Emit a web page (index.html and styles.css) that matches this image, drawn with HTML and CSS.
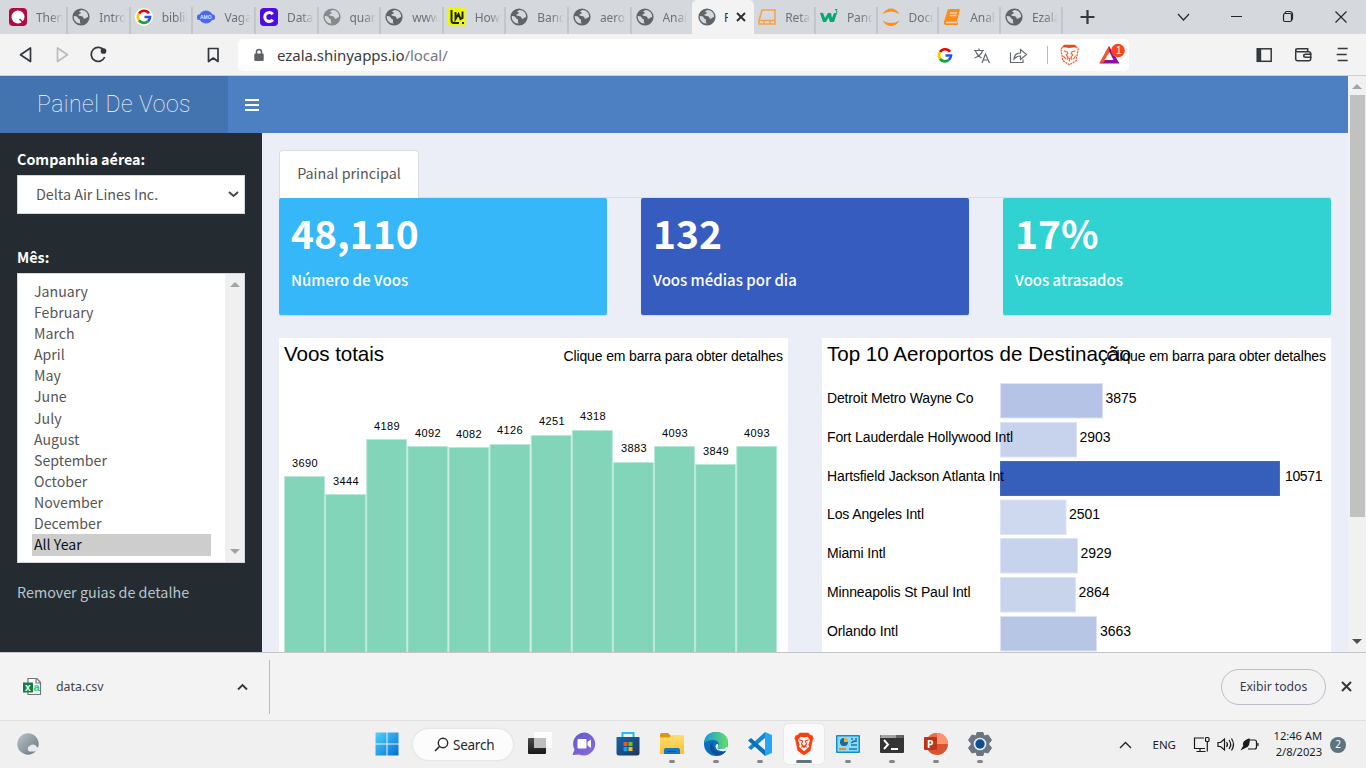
FILE: index.html
```html
<!DOCTYPE html>
<html lang="pt">
<head>
<meta charset="utf-8">
<title>Painel De Voos</title>
<link rel="stylesheet" href="styles.css">
</head>
<body>
<svg class="defs" width="0" height="0">
  <defs>
    <symbol id="globe" viewBox="0 0 18 18"><circle cx="9" cy="9" r="8.6" fill="currentColor"/><path d="M1.800 8c2.500-.2 3.800.7 4.100 1.900.2 1 2 .8 2.100 2 .1 1.200-.6 2.200.8 3.600C4.800 15.900 1.300 12.300 1.800 8zM9.500 2c-.8.7-2.400.8-2.300 1.700.1.700 1.900.4 1.700 1.400-.2 1-2.200.8-2.500 1.700-.2.700.6 1.200 2.200 1.200 1.500.1 2.700.5 2.800 1.600.1 1 .6 1.300 1.500 1.100 1.200-.3 1.800-1.700 3.200-1.700C16.500 5 13.200 2.200 9.500 2z" fill="#d5d8dc"/></symbol>
    <symbol id="google" viewBox="0 0 18 18"><g fill="none" stroke-width="2.700"><path d="M14 5.300A6 6 0 0 0 4 5.600" stroke="#e60000"/><path d="M4 5.600a6 6 0 0 0 0 6.800" stroke="#f4d000"/><path d="M4 12.400a6 6 0 0 0 9 .8" stroke="#10a830"/><path d="M9.500 9h5.500a6 6 0 0 1-2 4.200" stroke="#2850e8"/></g></symbol>
    <symbol id="lion" viewBox="0 0 24 28"><path d="M7 1h10l2.500 2.500L22 4l1 4-1 2-2.500 12L12 27l-7.500-5L2 10 1 8l1-4 2.500-.5z" fill="#ff3d0b"/><path d="M8 5.500l4 1 4-1 3 4-2 5.500 1 2-6 5.500L6 17l1-2-2-5.500z" fill="#fff"/><path d="M6.500 9l4 1.500L9 14l2 2-2 2M17.500 9l-4 1.500L15 14l-2 2 2 2M10.500 16.500h3L12 18z" fill="none" stroke="#f23c12" stroke-width="1.300"/></symbol>
    <symbol id="lion-light" viewBox="0 0 24 28"><path d="M6 2.500h12l4.500 4-2.500 14.500L12 26l-8-5L1.500 6.500z" fill="#fff" stroke="#f5572c" stroke-width="1.500" stroke-dasharray="2.500 1"/><path d="M5.500 1.500h13l3 3.500-4-.5-5.500 1-5.500-1-4 .5z" fill="#fb4310"/><path d="M5 9l4 1 1 2-2 2 2 2-1 4M19 9l-4 1-1 2 2 2-2 2 1 4M4.500 15l3 4M19.500 15l-3 4M9.500 17l2.500 1.500 2.500-1.500M12 18v4" fill="none" stroke="#f66a38" stroke-width="1.400"/></symbol>
    <linearGradient id="gWin" x2="1" y2="1"><stop stop-color="#4fd3ff"/><stop offset="1" stop-color="#006fd2"/></linearGradient>
    <linearGradient id="gEdge" x2="1"><stop stop-color="#1899dc"/><stop offset="1" stop-color="#66df62"/></linearGradient>
    <linearGradient id="gTask" x2="0" y2="1"><stop stop-color="#4c4c4c"/><stop offset="1" stop-color="#171717"/></linearGradient>
    <linearGradient id="gChat" x2="1" y2="1"><stop stop-color="#5c5dcd"/><stop offset="1" stop-color="#8d68d8"/></linearGradient>
    <linearGradient id="gFold" x2="0" y2="1"><stop stop-color="#ffde70"/><stop offset="1" stop-color="#fac12d"/></linearGradient>
    <linearGradient id="gMoon" x2="1" y2="1"><stop stop-color="#bac4cb"/><stop offset="1" stop-color="#69737c"/></linearGradient>
    <linearGradient id="gStore" x2="1" y2="1"><stop stop-color="#1266ae"/><stop offset="1" stop-color="#20375f"/></linearGradient>
  </defs>
</svg>

<div class="tabs">
  <div class="tab first"><svg class="fav" viewBox="0 0 18 18"><rect width="18" height="18" rx="4" fill="#b20b42"/><circle cx="9" cy="9" r="6.500" fill="#fff"/><path d="M10.500 11l4 4" stroke="#b20b42" stroke-width="1.500"/></svg><span>Then</span></div>
  <div class="tab"><svg class="fav"><use href="#globe"/></svg><span>Intro</span></div>
  <div class="tab"><svg class="fav" viewBox="0 0 18 18"><circle cx="9" cy="9" r="9" fill="#fff"/><use href="#google" width="18" height="18"/></svg><span>biblia</span></div>
  <div class="tab"><svg class="fav" viewBox="0 0 18 18"><ellipse cx="9" cy="9" rx="7" ry="6.500" fill="#4f66f2"/><rect y="6.500" width="18" height="5.500" rx="2" fill="#4f66f2"/><text x="3" y="11" class="fav-amo">AMO</text></svg><span>Vaga</span></div>
  <div class="tab"><svg class="fav" viewBox="0 0 18 18"><rect width="18" height="18" rx="4" fill="#4f0ce0"/><path d="M12.800 6.200a4.500 4.500 0 1 0 0 5.600" fill="none" stroke="#fff" stroke-width="3"/></svg><span>Data</span></div>
  <div class="tab"><svg class="fav light"><use href="#globe"/></svg><span>quar</span></div>
  <div class="tab"><svg class="fav"><use href="#globe"/></svg><span>www.</span></div>
  <div class="tab"><svg class="fav" viewBox="0 0 18 18"><rect width="18" height="18" fill="#ecfa00"/><path d="M3.500 2v10.500q0 2.500 2.500 2.500h5M7.500 4v7l3-5 2 5 2-1V3.500" fill="none" stroke="#222" stroke-width="2"/><rect x="14" y="14" width="2" height="2" fill="#222"/></svg><span>How</span></div>
  <div class="tab"><svg class="fav"><use href="#globe"/></svg><span>Banc</span></div>
  <div class="tab"><svg class="fav"><use href="#globe"/></svg><span>aero</span></div>
  <div class="tab last"><svg class="fav"><use href="#globe"/></svg><span>Anali</span></div>
  <div class="tab active"><svg class="fav"><use href="#globe"/></svg><span>Painel</span><svg class="x" viewBox="0 0 10 10"><path d="M1 1l8 8M9 1L1 9" stroke="#2c2e33" stroke-width="1.900"/></svg></div>
  <div class="tab after"><svg class="fav" viewBox="0 0 18 18"><path d="M4 2h13v10.500H1zM1 12.500V16h16v-3.500M6 13v3M12 13v3" fill="none" stroke="#f5a04a" stroke-width="1.500"/></svg><span>Reta</span></div>
  <div class="tab after"><svg class="fav" viewBox="0 0 18 18"><path d="M0 5q3-1 3.500 1L5 10l3-5h3l1 5 2-5h3l-3 9h-4L8.500 9.500 6 14H3z" fill="#04aa6d"/><path d="M15 1.500h2l-1 1.500q2 .5.500 2" fill="none" stroke="#04aa6d"/></svg><span>Panc</span></div>
  <div class="tab after"><svg class="fav" viewBox="0 0 18 18"><path d="M.5 6Q4 .5 9 .5T17.500 6Q13 3.500 9 3.500T.5 6zM.5 12.500Q4 18 9 18t8.500-5.500Q13 15 9 15T.5 12.500z" fill="#ff8d20"/></svg><span>Docu</span></div>
  <div class="tab after"><svg class="fav" viewBox="0 0 18 18"><path d="M5 1h12l-3 12.500 1 .500-.5 3H3q-2.500 0-2-3.500z" fill="#ff8b10"/><path d="M7 5h7M6.500 7.500h7M3 14.500h11" stroke="#d5d8dc" stroke-width="1.300"/></svg><span>Anali</span></div>
  <div class="tab after"><svg class="fav"><use href="#globe"/></svg><span>Ezala</span></div>
  <svg class="window-controls" width="300" height="34" fill="none" stroke="#25272b" stroke-width="1.200"><path d="M14.500 17h14M21.500 10v14" stroke="#36393f" stroke-width="2.200"/><path d="M112 14l5.500 6 5.500-6M165 16.500h11M219 13.500q0-2 2-2h2.500q3 0 3 3v3.500q0 2-1 2"/><rect x="217.500" y="13.500" width="8" height="8" rx="1.500"/><path d="M269.500 11.500l11 11M280.500 11.500l-11 11"/></svg>
</div>

<div class="toolbar">
  <svg class="nav" width="238" height="41" fill="none" stroke="#33363c" stroke-width="1.700" stroke-linejoin="round"><path d="M30.500 14v13.500l-10-6.700z"/><path d="M57.500 14v13.500l10-6.700z" stroke="#babbbd"/><path d="M104 16.500a7 7 0 1 0 .7 6.500"/><circle cx="103.500" cy="17" r="2" fill="#33363c"/><path d="M208.500 14.500h9.500V27.500l-4.700-3.500-4.800 3.500z"/></svg>
  <div class="address">
    <svg class="lock" width="10" height="14"><path d="M2.500 6V4a2.500 2.500 0 0 1 5 0v2" fill="none" stroke="#5c6067" stroke-width="1.500"/><rect x=".3" y="5.500" width="9.400" height="7.500" rx="1" fill="#5c6067"/></svg>
    <span class="url">ezala.shinyapps.io<span class="path">/local/</span></span>
    <svg class="address-icons" width="197" height="32" viewBox="0 0 197 32">
      <use href="#google" x="4" y="7.500" width="18" height="18"/>
      <g fill="none" stroke="#66696e" stroke-width="1.200"><path d="M42 11.500h10M47 9.500v2M43.500 12q2 5 6 7M50.500 12q-2 5-8 7M50 24l3.500-9 4 9M51.500 21h5"/><path d="M78.500 13.500v10h12.500v-3M82 20q.5-6 6.500-6v-3.500l6 5-6 5V17q-4 0-6.500 3z"/></g>
      <path d="M115.500 7v18" stroke="#b9babd"/>
      <use href="#lion-light" x="127" y="4.500" width="21" height="23"/>
      <path d="M177 7l10.500 17.500h-20z" fill="#8a12a2"/><path d="M177 7l-9.500 17 4-.5 6-9z" fill="#ff5326"/><path d="M177.500 13l4 8h-9z" fill="#fff"/><circle cx="186" cy="11.500" r="6.800" fill="#ff4514"/><text class="badge" x="184" y="15">1</text>
    </svg>
  </div>
  <svg class="tools" width="236" height="41" fill="none" stroke="#34373c" stroke-width="1.500"><g transform="translate(.7 .3)"><rect x="127.500" y="14.500" width="14" height="12.500"/><path d="M129.500 14v13" stroke-width="4"/><path d="M166 17v7.500q0 2 2 2h11q2 0 2-2v-5q0-2-2-2h-11q-2 0-2-1.500t2-1.500h10v3M182 20h-6q-2 0-2 1.500t2 1.500h6"/><path d="M208 14.200h10M207 20.200h10M208 26.200h10" stroke-width="1.700"/></g></svg>
</div>

<div class="viewport">
  <div class="app">
    <header class="app-header"><div class="brand">Painel De Voos</div><svg class="burger" width="14" height="12"><path d="M0 1h14M0 6h14M0 11h14" stroke="#fff" stroke-width="2"/></svg></header>
    <div class="app-body">
      <aside class="sidebar">
        <div class="label">Companhia aérea:</div>
        <div class="select"><span>Delta Air Lines Inc.</span><svg width="11" height="7"><path d="M1 1l4.500 4L10 1" fill="none" stroke="#484848" stroke-width="2"/></svg></div>
        <div class="label month-label">Mês:</div>
        <div class="listbox">
          <div class="options"><div>January</div><div>February</div><div>March</div><div>April</div><div>May</div><div>June</div><div>July</div><div>August</div><div>September</div><div>October</div><div>November</div><div>December</div><div class="selected">All Year</div></div>
          <div class="list-scroll"><svg width="10" height="5"><path d="M0 5l5-5 5 5z" fill="#a3a3a3"/></svg><svg width="10" height="5"><path d="M0 0l5 5 5-5z" fill="#a3a3a3"/></svg></div>
        </div>
        <div class="remove">Remover guias de detalhe</div>
      </aside>
      <main class="main">
        <div class="page-tabs"><div class="page-tab">Painal principal</div></div>
        <div class="cards">
          <div class="card sky"><div class="value">48,110</div><div class="caption">Número de Voos</div></div>
          <div class="card blue"><div class="value">132</div><div class="caption">Voos médias por dia</div></div>
          <div class="card teal"><div class="value">17%</div><div class="caption">Voos atrasados</div></div>
        </div>
        <div class="charts">
          <svg class="chart" width="509" height="314">
            <text class="title" x="5" y="23" textLength="100">Voos totais</text><text class="hint" x="284.500" y="23" textLength="219.500">Clique em barra para obter detalhes</text>
            <g class="bars" fill="#82d5b8" stroke="#b9e8d8"><path d="M5.500 320V138.500h40V320M46.600 320V156.500h40V320M87.700 320V101.500h40V320M128.800 320V108.500h40V320M169.900 320V109.500h40V320M211 320V106.500h40V320M252.200 320V97.500h40V320M293.300 320V92.500h40V320M334.400 320V124.500h40V320M375.500 320V108.500h40V320M416.600 320V126.500h40V320M457.700 320V108.500h40V320"/></g>
            <g class="vals"><text x="26" y="129">3690</text><text x="67" y="147">3444</text><text x="108" y="92">4189</text><text x="149" y="99">4092</text><text x="190" y="100">4082</text><text x="231" y="96">4126</text><text x="273" y="87">4251</text><text x="314" y="82">4318</text><text x="355" y="114">3883</text><text x="396" y="99">4093</text><text x="437" y="117">3849</text><text x="478" y="99">4093</text></g>
          </svg>
          <svg class="chart" width="509" height="314">
            <text class="title" x="5" y="23" textLength="304">Top 10 Aeroportos de Destinação</text><text class="hint" x="284.500" y="23" textLength="219.500">Clique em barra para obter detalhes</text>
            <g stroke="#dce3f3"><rect x="178.500" y="45.500" width="102" height="34.500" fill="#b5c3e6"/><rect x="178.500" y="84.500" width="76" height="34.500" fill="#c7d2ec"/><rect x="178.500" y="123.500" width="279" height="34" fill="#355fbb" stroke="#446bc0"/><rect x="178.500" y="162" width="65.500" height="34.500" fill="#ced9f0"/><rect x="178.500" y="200.500" width="77" height="34.500" fill="#c7d2ec"/><rect x="178.500" y="239.500" width="75" height="34.500" fill="#c8d3ec"/><rect x="178.500" y="278.500" width="96" height="34.500" fill="#b8c6e6"/></g>
            <g class="rows"><text x="5" y="65" textLength="146.500">Detroit Metro Wayne Co</text><text x="283.500" y="65">3875</text><text x="5" y="104" textLength="186">Fort Lauderdale Hollywood Intl</text><text x="257.500" y="104">2903</text><text x="5" y="143" textLength="177">Hartsfield Jackson Atlanta Int</text><text x="463" y="143" textLength="37.500">10571</text><text x="5" y="181" textLength="97">Los Angeles Intl</text><text x="247" y="181">2501</text><text x="5" y="220" textLength="58.500">Miami Intl</text><text x="258.500" y="220">2929</text><text x="5" y="259" textLength="143.500">Minneapolis St Paul Intl</text><text x="256.500" y="259">2864</text><text x="5" y="298" textLength="71">Orlando Intl</text><text x="278" y="298">3663</text></g>
          </svg>
        </div>
      </main>
    </div>
  </div>
  <div class="scrollbar"><svg width="10" height="5"><path d="M0 5l5-5 5 5z" fill="#a3a3a3"/></svg><div class="thumb"></div><svg width="10" height="5"><path d="M0 0l5 5 5-5z" fill="#505050"/></svg></div>
</div>

<div class="downloads">
  <div class="file">
    <svg width="19" height="19"><path d="M5 1.500h9l3.500 4v12H5zM13 1.500v4.500h5" fill="#fff" stroke="#777" stroke-width="1.200"/><rect y="5.500" width="10" height="10" fill="#128040"/><text class="file-x" x="2" y="14">x</text><text class="file-a" x="10.500" y="14">a</text></svg>
    <span>data.csv</span>
    <svg class="caret" width="11" height="8"><path d="M1 6.500l4.500-4.500L10 6.500" fill="none" stroke="#33363b" stroke-width="1.800"/></svg>
  </div>
  <div class="show-all">Exibir todos</div>
  <svg width="11" height="11"><path d="M1 1l9 9M10 1l-9 9" stroke="#33363b" stroke-width="2"/></svg>
</div>

<div class="taskbar">
  <svg class="weather" width="24" height="24"><circle cx="11" cy="12" r="10.700" fill="url(#gMoon)"/><path d="M12.500 19.500a3 3 0 0 1 0-5.500 4.500 4.500 0 0 1 7.500 1 2.500 2.500 0 0 1 .500 4.500z" fill="#e7e9ed"/></svg>
  <div class="apps">
    <div class="app-icon"><svg viewBox="0 0 24 24"><g fill="url(#gWin)"><path d="M.5.500h11v11H.500zM12.500.5h11v11h-11zM.5 12.500h11v11H.500zM12.500 12.500h11v11h-11z"/></g></svg></div>
    <div class="search"><svg width="15" height="16"><circle cx="9" cy="6" r="4.700" fill="none" stroke="#262626" stroke-width="1.400"/><path d="M5.500 9.500L1 14" stroke="#262626" stroke-width="1.600"/></svg><span>Search</span></div>
    <div class="app-icon"><svg viewBox="0 0 24 24"><rect y="6" width="18" height="16" rx="1" fill="url(#gTask)"/><rect x="6" y="0" width="18" height="16" rx="1" fill="#fff" opacity=".85"/><path d="M6 6h12v10H6z" fill="#bebebe"/></svg></div>
    <div class="app-icon"><svg viewBox="0 0 24 24"><path d="M12 .5A11.500 11.500 0 1 1 7 22.500L.5 23l2-5.500A11.500 11.500 0 0 1 12 .5z" fill="url(#gChat)"/><rect x="5.500" y="7" width="9" height="9.500" rx="1" fill="#fff"/><path d="M15.500 10l3.500-2.500v8.500l-3.500-2.500z" fill="#fff"/></svg></div>
    <div class="app-icon"><svg viewBox="0 0 24 24"><path d="M6.500 6V1h11v5" fill="none" stroke="#24bdec" stroke-width="2"/><path d="M.5 5h23v16q0 2.500-2.500 2.500H3Q.5 23.500.5 21z" fill="url(#gStore)"/><path d="M7.500 10h4v4h-4z" fill="#f35325"/><path d="M12.500 10h4v4h-4z" fill="#81bc06"/><path d="M7.500 15h4v4h-4z" fill="#05a6f0"/><path d="M12.500 15h4v4h-4z" fill="#ffba08"/></svg></div>
    <div class="app-icon run"><svg viewBox="0 0 24 24"><path d="M0 3q0-2 2-2h6l3 3v4H0z" fill="#d6980e"/><path d="M0 5.500h9L12 3h12v19H0z" fill="url(#gFold)"/><path d="M4 22v-4q0-2 2-2h12q2 0 2 2v4z" fill="#1175c9"/><path d="M8 19h8v1H8z" fill="#075494"/></svg></div>
    <div class="app-icon run"><svg viewBox="0 0 24 24"><circle cx="12" cy="12" r="12" fill="#096fc0"/><path d="M0 11Q1 0 12 0c8 0 12 5 12 10s-3 7-7 7c-3 0-4-1-3-2 2-2 1-7-5-7S0 11 0 11z" fill="url(#gEdge)"/><path d="M8.500 10c-5 3-2 14 6 13.500 3 0 6-2 7.500-4.500-6 2.500-12 0-13-5 0-2 .5-3-.5-4z" fill="#124f98"/><path d="M14 12q1 2-.5 3.500Q13 17 17 17q5 0 7-4-.5 4-2.500 6-9 1-10-4.500 0-3 2.500-2.500z" fill="#eef3f4"/></svg></div>
    <div class="app-icon run"><svg viewBox="0 0 24 24"><path d="M17 0l7 3v18l-7 3z" fill="#2aa5f2"/><path d="M17 0v6L3 18l-3-2.500z" fill="#1688d1"/><path d="M0 8.500L3 6l14 12v6z" fill="#0872b8"/></svg></div>
    <div class="app-icon run current"><svg viewBox="0 0 24 24"><use href="#lion" x="1" width="22" height="24"/></svg></div>
    <div class="app-icon run"><svg viewBox="0 0 24 24"><rect y="3" width="24" height="18" rx="1" fill="#168bd0"/><rect x="1.500" y="4.500" width="21" height="15" fill="#8bdcfb"/><circle cx="8" cy="10" r="4" fill="#116bae"/><path d="M8 10V5.500A4.500 4.500 0 0 1 12.500 10z" fill="#fcaa20"/><path d="M15 7h2m2 0h2M15 11l3-2h3M15 13h6M13 17h8" stroke="#1879ba" stroke-width="1.500"/><path d="M3 17h7" stroke="#f28d13" stroke-width="2"/></svg></div>
    <div class="app-icon run"><svg viewBox="0 0 24 24"><rect y="3" width="24" height="18" rx="1" fill="#343434"/><path d="M1 3h15v3H0z" fill="#a3a3a3"/><path d="M16 3h7l1 3h-8z" fill="#666"/><path d="M4 8l4 4.500L4 17M11 17h7" fill="none" stroke="#fff" stroke-width="1.900"/></svg></div>
    <div class="app-icon run"><svg viewBox="0 0 24 24"><circle cx="13" cy="12" r="11" fill="#d65434"/><path d="M13 1a11 11 0 0 1 11 11H13z" fill="#ff946f"/><path d="M13 1v11H2A11 11 0 0 1 13 1z" fill="#ed6c47"/><rect y="5" width="13" height="13" rx="1" fill="#bd3519"/><text class="ppt" x="3" y="15.500">P</text></svg></div>
    <div class="app-icon run"><svg viewBox="0 0 24 24"><path d="M9 .5h6l1 3.500 4-1 3.500 5-3 4 3 4-3.500 5-4-1-1 3.500H9L8 20l-4 1L.5 16l3-4-3-4L4 3l4 1z" fill="#6b7680" stroke="#6b7680" stroke-linejoin="round"/><circle cx="12" cy="12" r="6.300" fill="#e6eef2"/><circle cx="12" cy="12" r="4.700" fill="#0d4d91"/></svg></div>
  </div>
  <div class="tray">
    <svg width="13" height="8"><path d="M1 7l5.500-5.500L12 7" fill="none" stroke="#202020" stroke-width="1.300"/></svg>
    <span class="lang">ENG</span>
    <svg class="status" width="66" height="18" fill="none" stroke="#1b1b1b" stroke-width="1.200"><path d="M11 2H1.500v10.500H12M7 12.500v3M3.500 15.500h9"/><rect x="12.500" y="1.500" width="3.500" height="4" rx="1"/><path d="M14.300 5.500v10"/><path d="M25 6.500h2.500L31.500 3v11L27.500 10.500H25zM33.500 6q2 2.500 0 5M36 4q3.500 4.500 0 9M38.500 2.500q4 6 0 12"/><path d="M56 4h5.500q2 0 2 2v5q0 2-2 2H55M65 7v3"/><path d="M49 13l2-3.500q-2-4 5-6.500 1 7-4 8.500z" fill="#1b1b1b"/></svg>
    <div class="clock"><div>12:46 AM</div><div>2/8/2023</div></div>
    <div class="count">2</div>
  </div>
</div>
</body>
</html>
```
FILE: styles.css
```css
* { box-sizing: border-box; }
body { margin: 0; width: 1366px; height: 768px; overflow: hidden; display: flex; flex-direction: column; font-family: "Noto Sans", sans-serif; background: #f3f3f3; }
svg { display: block; flex: none; }
.defs { position: absolute; }

.tabs { height: 34px; flex: none; display: flex; background: #d5d8dc; padding-left: 5px; }
.tab { width: 62.600px; flex: none; display: flex; align-items: center; padding: 0 3px 0 4px; gap: 9px; border-right: 2px solid transparent; border-image: linear-gradient(transparent 22%, #c3c5c9 22%) 1; }
.tab.first { width: 63.200px; }
.tab.last { width: 60.400px; border-image: none; }
.tab.after { width: 61.700px; }
.tab span { flex: 1; min-width: 0; overflow: hidden; white-space: nowrap; font-size: 12px; letter-spacing: -.1px; color: #6e7176; -webkit-mask-image: linear-gradient(90deg, #000 55%, transparent); }
.fav { width: 18px; height: 18px; color: #606368; }
.fav.light { color: #888989; }
.fav-amo { font: bold 5px "Liberation Sans", sans-serif; fill: #dce4ff; }
.tab.active { width: 62.300px; background: #f3f3f3; border-radius: 5px 5px 0 0; border-image: none; padding-left: 6px; gap: 6px; }
.tab.active span { color: #33363a; flex: 0 0 4px; margin-left: 2px; -webkit-mask-image: none; }
.x { width: 10px; height: 10px; margin-left: 2px; }
.window-controls { margin-left: auto; }

.toolbar { height: 42px; flex: none; display: flex; border-bottom: 1px solid #cfcfd1; background: #f3f3f3; }
.address { width: 891px; height: 32px; margin-top: 5px; background: #fff; border-radius: 5px; display: flex; align-items: center; }
.lock { margin-left: 16px; }
.url { margin-left: 13px; font-size: 15px; letter-spacing: -.05px; color: #393b40; }
.path { color: #74767a; }
.address-icons { margin-left: auto; }
.badge { font: 10px "Liberation Sans", sans-serif; fill: #fff; }

.viewport { height: 576px; flex: none; display: flex; overflow: hidden; }
.app { width: 1348px; font-family: "Noto Sans CJK SC", sans-serif; }
.app-header { height: 57px; display: flex; align-items: center; background: #4d80c2; }
.brand { width: 228px; height: 57px; line-height: 58px; text-align: center; color: #fff; background: #4474b0; font-family: Roboto, sans-serif; font-weight: 100; font-size: 23px; letter-spacing: .5px; white-space: nowrap; }
.burger { margin-left: 17px; }
.app-body { height: 519px; display: flex; }
.sidebar { width: 262px; background: #242c32; padding: 14px 17px; color: #fff; font-size: 14.330px; }
.label { height: 24px; line-height: 23px; font-weight: 700; margin-bottom: 4px; }
.select { height: 39px; border: 1px solid #d2d6de; background: #fff; color: #555; padding: 0 5px 0 18px; display: flex; align-items: center; justify-content: space-between; }
.select span { line-height: 34px; margin-bottom: 2px; }
.month-label { margin-top: 31px; }
.listbox { height: 290px; border: 1px solid #d2d6de; background: #fff; color: #555; display: flex; }
.options { flex: 1; padding: 7px 14px; line-height: 21.100px; font-size: 14.150px; }
.options div { height: 21.100px; padding-left: 2px; }
.options .selected { background: #cdcdcd; color: #101010; height: 22px; }
.list-scroll { width: 19px; background: #f0f0f0; display: flex; flex-direction: column; justify-content: space-between; align-items: center; padding: 8px 0; }
.remove { color: #b8c7ce; margin-top: 18px; line-height: 22px; }

.main { flex: 1; background: #ebeef6; padding: 17px 17px 0; }
.page-tabs { height: 48px; border-bottom: 1px solid #dcdcdf; }
.page-tab { width: 140px; height: 48px; line-height: 44px; text-align: center; background: #fff; color: #555; border: 1px solid #dcdcdf; border-bottom: 0; border-radius: 4px 4px 0 0; font-size: 14.330px; }
.cards { display: flex; gap: 34px; }
.card { width: 328px; height: 117px; padding: 10px 12px; border-radius: 2px; color: #fff; box-shadow: 0 1px 1px rgba(0,0,0,.1); }
.sky { background: #35b7f9; } .blue { background: #365cc0; } .teal { background: #30d2d2; }
.value { font-size: 39px; line-height: 48px; font-weight: 700; }
.caption { font-size: 15px; font-weight: 500; line-height: 22px; margin-top: 13px; }
.charts { display: flex; gap: 34px; margin-top: 23px; }
.chart { background: #fff; font-family: "Liberation Sans", sans-serif; }
.title { font-size: 20.600px; } .hint, .rows { font-size: 14px; }
.vals { font-size: 11px; text-anchor: middle; letter-spacing: .4px; }
.scrollbar { width: 18px; background: #f1f1f1; display: flex; flex-direction: column; align-items: center; padding: 8px 0; }
.thumb { width: 15px; height: 422px; margin: 6px 0 auto; background: #c1c1c1; }

.downloads { height: 68px; flex: none; border-top: 1px solid #c5c5c7; display: flex; align-items: center; padding-right: 14px; background: #f3f3f3; }
.file { width: 270px; height: 54px; border-right: 1px solid #bbb; display: flex; align-items: center; padding: 0 21px 0 23px; font-size: 12.400px; color: #414247; }
.file span { margin-left: 14px; }
.caret { margin-left: auto; }
.file-x { font: bold 10px "Liberation Sans", sans-serif; fill: #fff; }
.file-a { font: bold 11px "Liberation Sans", sans-serif; fill: #20ce7a; }
.show-all { width: 105px; height: 36px; line-height: 33px; text-align: center; border: 1px solid #bcbccc; border-radius: 18px; margin: 0 15px 0 auto; font-size: 12.200px; color: #39394d; }

.taskbar { height: 48px; flex: none; display: flex; background: #f0f0f0; border-top: 1px solid #e0e0e0; }
.weather { margin: 11px 0 0 17px; }
.apps { display: flex; margin-left: 326px; gap: 4px; padding-top: 3px; }
.app-icon { width: 40px; height: 40px; display: flex; flex-direction: column; align-items: center; padding-top: 8px; border-radius: 4px; }
.app-icon svg { width: 24px; height: 24px; }
.run::after { content: ""; width: 6px; height: 3px; border-radius: 2px; background: #878787; margin-top: 4px; }
.current { background: #fafafa; box-shadow: 0 0 1px #bbb; }
.current::after { width: 16px; background: #5f7480; }
.search { width: 100px; height: 31px; margin: 5px 3px 0 2px; border-radius: 16px; background: #fcfcfc; box-shadow: 0 0 2px #ccc; display: flex; align-items: center; padding-left: 21px; gap: 4px; font-size: 13.500px; letter-spacing: -.25px; color: #282828; }
.ppt { font: bold 10.500px "Noto Sans", sans-serif; fill: #fff; }
.tray { margin-left: auto; padding-right: 20px; display: flex; align-items: center; color: #1d1d1d; }
.lang { font-size: 11.500px; margin-left: 20px; }
.status { margin-left: 17px; }
.clock { width: 54px; text-align: right; font-size: 11.200px; line-height: 16px; letter-spacing: -.05px; white-space: nowrap; margin-left: 9px; position: relative; top: -1px; }
.count { width: 16px; height: 16px; margin-left: 8px; border-radius: 50%; background: #5d7380; color: #fff; font-size: 10px; line-height: 15px; text-align: center; }
```
